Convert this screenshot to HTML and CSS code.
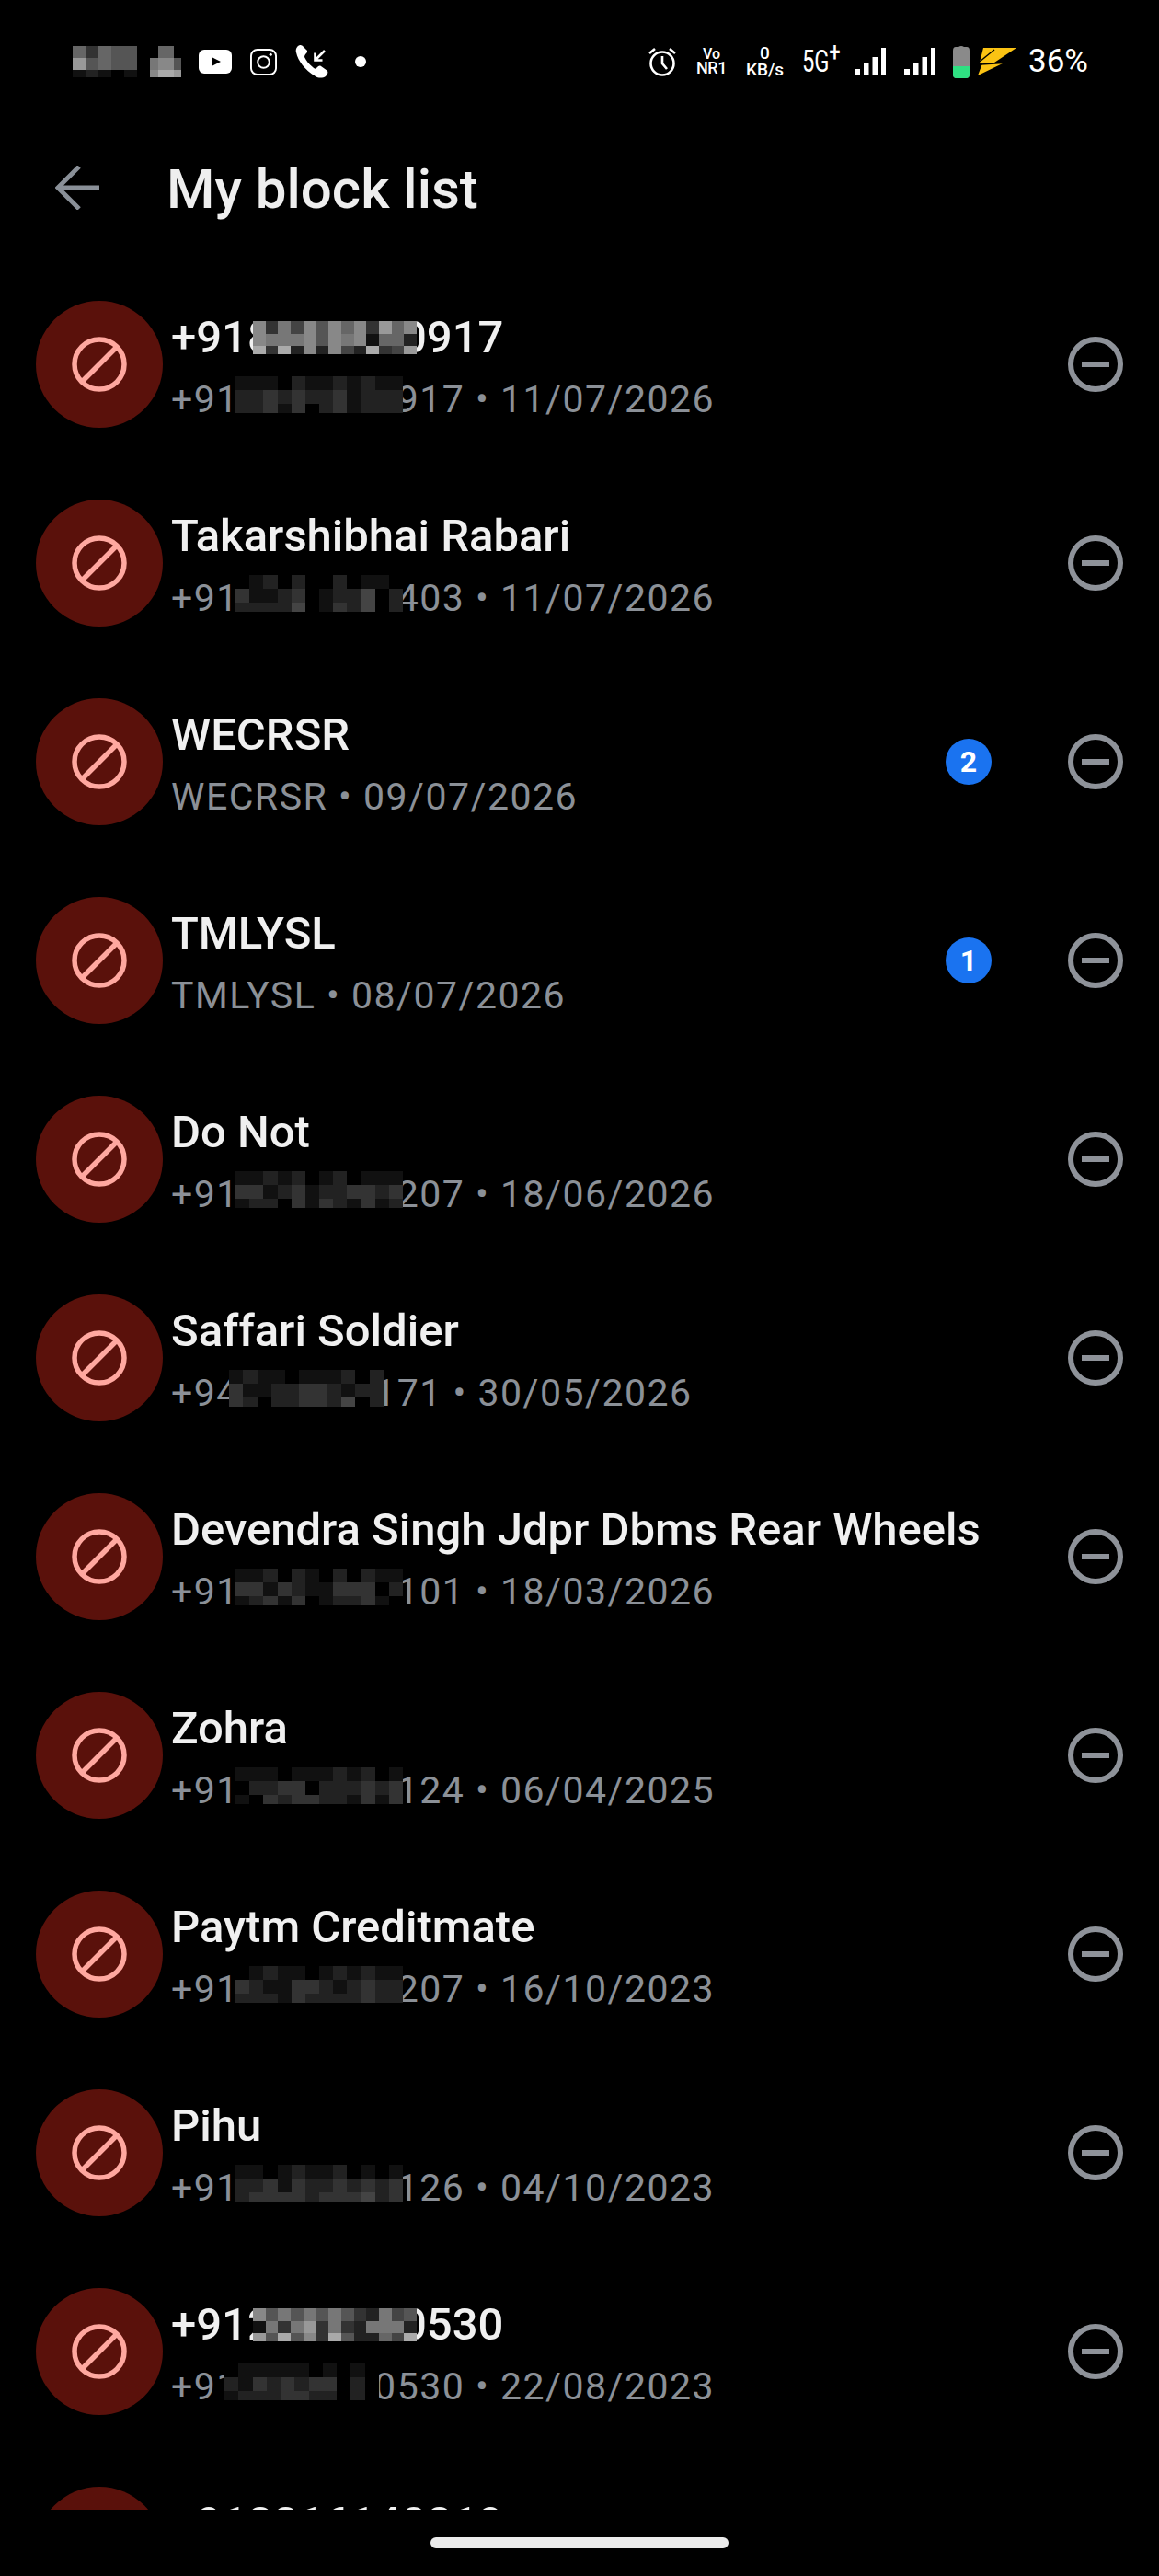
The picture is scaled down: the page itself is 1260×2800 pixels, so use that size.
FILE: index.html
```html
<!DOCTYPE html>
<html lang="en">
<head>
    <meta charset="UTF-8" />
    <title>My block list</title>
    <link rel="stylesheet" href="styles.css">
</head>
<body>
    <!-- Shared icons -->
    <svg class="icon-defs" width="0" height="0">
        <symbol id="ban" viewBox="0 0 60 60">
            <circle cx="30" cy="30" r="27" fill="none" stroke="currentColor" stroke-width="5.5" />
            <line x1="12" y1="48" x2="48" y2="12" stroke="currentColor" stroke-width="5.5" />
        </symbol>
        <symbol id="minus" viewBox="0 0 60 60">
            <circle cx="30" cy="30" r="27" fill="none" stroke="currentColor" stroke-width="6" />
            <rect x="15" y="27" width="30" height="6" fill="currentColor" />
        </symbol>
        <symbol id="signal" viewBox="0 0 34 30">
            <rect x="0" y="23" width="6" height="7" fill="#fff" />
            <rect x="10" y="17" width="5.5" height="13" fill="#fff" />
            <rect x="19.5" y="10" width="5.5" height="20" fill="#fff" />
            <rect x="29" y="0" width="5" height="30" fill="#fff" />
        </symbol>
    </svg>

    <div class="phone">
        <div class="status">
            <span class="mosaic blur-a" data-cells="63655|95655|12101"></span>
            <span class="mosaic blur-b" data-cells="0660|7885|8aa9"></span>
            <svg class="st-youtube" viewBox="0 0 36 26">
                <rect width="36" height="26" rx="6" fill="#fff" />
                <path d="M14 8 L24 13 L14 18 Z" fill="#000" />
            </svg>
            <svg class="st-insta" viewBox="0 0 30 30" fill="none" stroke="#fff" stroke-width="2">
                <rect x="1" y="1" width="28" height="28" rx="7" />
                <circle cx="15" cy="15" r="6.5" />
                <circle cx="23" cy="6.5" r="1.6" fill="#fff" stroke="none" />
            </svg>
            <svg class="st-call" viewBox="0 0 36 36">
                <path d="M5 0 C2 1 0 4 1 8 C3 17 10 27 22 34 C25 36 30 36 33 34 C35 32 36 30 35 28 L28 23 C26 22 25 23 23 25 C22 26 21 26 19 24 C15 21 12 17 10 13 C10 11 11 10 12 9 C13 8 13 7 13 6 L8 1 C7 0 6 0 5 0 Z" fill="#fff" />
                <path d="M32 6 L23 15 M21.5 8.5 L21.5 16.5 L29.5 16.5" fill="none" stroke="#fff" stroke-width="2.6" />
            </svg>
            <span class="st-dot"></span>

            <div class="status-right">
                <svg class="st-alarm" viewBox="0 0 30 32" fill="none" stroke="#fff" stroke-width="2.6">
                    <circle cx="15" cy="18" r="12.5" />
                    <path d="M15 10 V18 L20 24" />
                    <path d="M1 7 L7 2 M29 7 L23 2" />
                </svg>
                <div class="st-vonr"><span class="vo">Vo</span><span class="nr">NR1</span></div>
                <div class="st-speed"><span>0</span><span>KB/s</span></div>
                <span class="st-5g">5G<sup>+</sup></span>
                <svg class="st-signal"><use href="#signal" /></svg>
                <svg class="st-signal st-signal-2"><use href="#signal" /></svg>
                <svg class="st-battery" viewBox="0 0 18 36">
                    <path d="M6 2 Q9 0 12 2 H15 Q18 2 18 6 V32 Q18 36 14 36 H4 Q0 36 0 32 V6 Q0 2 3 2 Z" fill="#8a8a8a" />
                    <path d="M0 23 H18 V32 Q18 36 14 36 H4 Q0 36 0 32 Z" fill="#2fe082" />
                </svg>
                <svg class="st-bolt" viewBox="0 0 42 30">
                    <polygon points="6,0 42,0 18,16 29,16 0,30 5,17 2,16" fill="#fbc313" />
                    <line x1="2" y1="15" x2="18" y2="2" stroke="#000" stroke-width="1.4" />
                    <line x1="3" y1="18" x2="27" y2="16.5" stroke="#000" stroke-width="1.4" />
                </svg>
                <span class="st-pct">36%</span>
            </div>
        </div>

        <header class="topbar">
            <svg class="back" viewBox="0 0 48 48" fill="none" stroke="#8a9098" stroke-width="5">
                <path d="M48 24 H3 M26 1 L3 24 L26 47" />
            </svg>
            <h1>My block list</h1>
        </header>

        <main class="list">
            <div class="row">
                <div class="avatar"><svg><use href="#ban" /></svg></div>
                <div class="info">
                    <div class="name">+918000000917<span class="mosaic mask-name" data-cells="8374858683968|8777858781662|a3a282842a349"></span></div>
                    <div class="sub">+910000000917 • 11/07/2026<span class="mosaic mask-sub" data-cells="111021121211|223232231222|223130231222"></span></div>
                </div>
                <svg class="remove"><use href="#minus" /></svg>
            </div>
            <div class="row">
                <div class="avatar"><svg><use href="#ban" /></svg></div>
                <div class="info">
                    <div class="name">Takarshibhai Rabari</div>
                    <div class="sub">+910000000403 • 11/07/2026<span class="mosaic mask-sub" data-cells="012020020110|311230122402|222240132402"></span></div>
                </div>
                <svg class="remove"><use href="#minus" /></svg>
            </div>
            <div class="row">
                <div class="avatar"><svg><use href="#ban" /></svg></div>
                <div class="info">
                    <div class="name">WECRSR</div>
                    <div class="sub">WECRSR • 09/07/2026</div>
                </div>
                <span class="badge">2</span>
                <svg class="remove"><use href="#minus" /></svg>
            </div>
            <div class="row">
                <div class="avatar"><svg><use href="#ban" /></svg></div>
                <div class="info">
                    <div class="name">TMLYSL</div>
                    <div class="sub">TMLYSL • 08/07/2026</div>
                </div>
                <span class="badge">1</span>
                <svg class="remove"><use href="#minus" /></svg>
            </div>
            <div class="row">
                <div class="avatar"><svg><use href="#ban" /></svg></div>
                <div class="info">
                    <div class="name">Do Not</div>
                    <div class="sub">+910000000207 • 18/06/2026<span class="mosaic mask-sub" data-cells="112120120111|331231223323|122031321312"></span></div>
                </div>
                <svg class="remove"><use href="#minus" /></svg>
            </div>
            <div class="row">
                <div class="avatar"><svg><use href="#ban" /></svg></div>
                <div class="info">
                    <div class="name">Saffari Soldier</div>
                    <div class="sub">+94000000171 • 30/05/2026<span class="mosaic mask-sub mask-short" data-cells="12110111202|31122332122|32022332402"></span></div>
                </div>
                <svg class="remove"><use href="#minus" /></svg>
            </div>
            <div class="row">
                <div class="avatar"><svg><use href="#ban" /></svg></div>
                <div class="info">
                    <div class="name">Devendra Singh Jdpr Dbms Rear Wheels</div>
                    <div class="sub">+910000000101 • 18/03/2026<span class="mosaic mask-sub" data-cells="112021020211|331321133302|123130122310"></span></div>
                </div>
                <svg class="remove"><use href="#minus" /></svg>
            </div>
            <div class="row">
                <div class="avatar"><svg><use href="#ban" /></svg></div>
                <div class="info">
                    <div class="name">Zohra</div>
                    <div class="sub">+910000000124 • 06/04/2025<span class="mosaic mask-sub" data-cells="111011121201|022330222323|103233221313"></span></div>
                </div>
                <svg class="remove"><use href="#minus" /></svg>
            </div>
            <div class="row">
                <div class="avatar"><svg><use href="#ban" /></svg></div>
                <div class="info">
                    <div class="name">Paytm Creditmate</div>
                    <div class="sub">+910000000207 • 16/10/2023<span class="mosaic mask-sub" data-cells="012110121211|321133212322|222132222322"></span></div>
                </div>
                <svg class="remove"><use href="#minus" /></svg>
            </div>
            <div class="row">
                <div class="avatar"><svg><use href="#ban" /></svg></div>
                <div class="info">
                    <div class="name">Pihu</div>
                    <div class="sub">+910000000126 • 04/10/2023<span class="mosaic mask-sub" data-cells="110121120101|223132232323|233332333423"></span></div>
                </div>
                <svg class="remove"><use href="#minus" /></svg>
            </div>
            <div class="row">
                <div class="avatar"><svg><use href="#ban" /></svg></div>
                <div class="info">
                    <div class="name">+912000000530<span class="mosaic mask-name" data-cells="8575757532745|1737937327772|95a583a52264a"></span></div>
                    <div class="sub">+910000000530 • 22/08/2023<span class="mosaic mask-sub mask-tail" data-cells="01111101010|21323233020|12223322020"></span></div>
                </div>
                <svg class="remove"><use href="#minus" /></svg>
            </div>
            <div class="row">
                <div class="avatar"><svg><use href="#ban" /></svg></div>
                <div class="info">
                    <div class="name">+918816140819</div>
                    <div class="sub-empty"></div>
                </div>
            </div>
        </main>

        <div class="home-bar"></div>
    </div>
    <script src="script.js"></script>
</body>
</html>
```

FILE: styles.css
```css
* {
    box-sizing: border-box;
}
body {
    margin: 0;
    background-color: rgb(0, 0, 0);
    font-family: Roboto, "Liberation Sans", sans-serif;
}
.icon-defs {
    display: block;
    height: 0;
}
.phone {
    width: 1260px;
    height: 2800px;
    overflow: hidden;
}

/* Status bar */
.status {
    display: flex;
    align-items: center;
    height: 120px;
    padding: 49px 78px 35px 79px;
    color: rgb(255, 255, 255);
}
.status svg {
    flex-shrink: 0;
}
.blur-a {
    width: 70px;
    height: 34px;
}
.blur-b {
    width: 34px;
    height: 34px;
    margin-left: 14px;
}
.st-youtube {
    width: 36px;
    height: 26px;
    margin-left: 19px;
}
.st-insta {
    width: 29px;
    height: 29px;
    margin-left: 20px;
}
.st-call {
    width: 36px;
    height: 36px;
    margin-left: 20px;
}
.st-dot {
    width: 12px;
    height: 12px;
    margin-left: 29px;
    border-radius: 50%;
    background: rgb(255, 255, 255);
}
.status-right {
    display: flex;
    align-items: center;
    margin-left: auto;
}
.st-alarm {
    width: 30px;
    height: 32px;
}
.st-vonr {
    display: flex;
    flex-direction: column;
    align-items: center;
    width: 33px;
    margin-left: 22px;
    font-weight: 500;
}
.vo {
    font-size: 16px;
    line-height: 14px;
}
.nr {
    font-size: 18px;
    letter-spacing: -0.5px;
    line-height: 16px;
}
.st-speed {
    display: flex;
    flex-direction: column;
    align-items: center;
    width: 45px;
    margin-left: 19px;
    font-size: 19px;
    font-weight: 500;
    line-height: 18px;
}
.st-5g {
    width: 46px;
    margin-left: 18px;
    font-size: 33px;
    line-height: 36px;
    white-space: nowrap;
    transform: scaleX(0.72);
    transform-origin: left center;
}
.st-5g sup {
    font-size: 30px;
    line-height: 0;
    font-weight: 500;
}
.st-signal {
    width: 34px;
    height: 30px;
    margin-left: 11px;
}
.st-signal-2 {
    margin-left: 20px;
}
.st-battery {
    width: 18px;
    height: 36px;
    margin-left: 19px;
}
.st-bolt {
    width: 42px;
    height: 30px;
    margin-left: 9px;
}
.st-pct {
    width: 64px;
    margin-left: 13px;
    font-size: 35px;
    line-height: 36px;
    white-space: nowrap;
}

/* Title */
.topbar {
    display: flex;
    align-items: center;
    height: 168px;
    padding-left: 60px;
}
.back {
    width: 48px;
    height: 48px;
}
.topbar h1 {
    margin: 2px 0 0 73px;
    color: rgb(238, 238, 238);
    font-size: 60px;
    font-weight: 500;
}

/* Rows */
.list {
    height: 2440px;
    overflow: hidden;
}
.row {
    display: flex;
    align-items: center;
    height: 216px;
    padding: 0 39px;
}
.avatar {
    display: flex;
    align-items: center;
    justify-content: center;
    flex-shrink: 0;
    width: 138px;
    height: 138px;
    border-radius: 50%;
    background: rgb(90, 17, 11);
    color: rgb(255, 168, 160);
}
.avatar svg {
    width: 60px;
    height: 60px;
}
.info {
    flex: 1;
    margin-left: 9px;
    padding-top: 12px;
}
.name {
    position: relative;
    color: rgb(240, 240, 240);
    font-size: 49px;
    font-weight: 500;
    line-height: 64px;
}
.sub {
    position: relative;
    color: rgb(139, 144, 151);
    font-size: 41px;
    letter-spacing: 1.5px;
    line-height: 70px;
}
.sub-empty {
    height: 70px;
}
.badge {
    flex-shrink: 0;
    width: 50px;
    height: 50px;
    margin-right: 83px;
    border-radius: 50%;
    background: rgb(26, 115, 240);
    color: rgb(255, 255, 255);
    font-size: 32px;
    font-weight: 700;
    line-height: 50px;
    text-align: center;
}
.remove {
    flex-shrink: 0;
    width: 60px;
    height: 60px;
    color: rgb(142, 146, 153);
}

/* Blurred-out digits */
.mosaic {
    display: grid;
    flex-shrink: 0;
    overflow: hidden;
}
.mask-name,
.mask-sub {
    position: absolute;
}
.mask-name {
    top: 14px;
    left: 89px;
    width: 178px;
    height: 36px;
}
.mask-sub {
    top: 10px;
    left: 70px;
    width: 182px;
    height: 40px;
}
.mask-short {
    left: 63px;
    width: 168px;
}
.mask-tail {
    left: 58px;
    width: 168px;
}

.home-bar {
    width: 324px;
    height: 12px;
    margin: 30px 0 0 468px;
    border-radius: 6px;
    background: rgb(235, 235, 235);
}
```

FILE: script.js
```js
// Build the pixelated blocks from their data-cells, one hex digit = one grey
document.querySelectorAll('.mosaic').forEach(block => {
    const rows = block.dataset.cells.split('|');
    block.style.gridTemplateColumns = `repeat(${rows[0].length}, 1fr)`;
    block.style.gridTemplateRows = '3fr 3fr 2fr';
    rows.join('').split('').forEach(digit => {
        const cell = document.createElement('i');
        cell.style.background = `#${digit}${digit}${digit}`;
        block.appendChild(cell);
    });
});
```
